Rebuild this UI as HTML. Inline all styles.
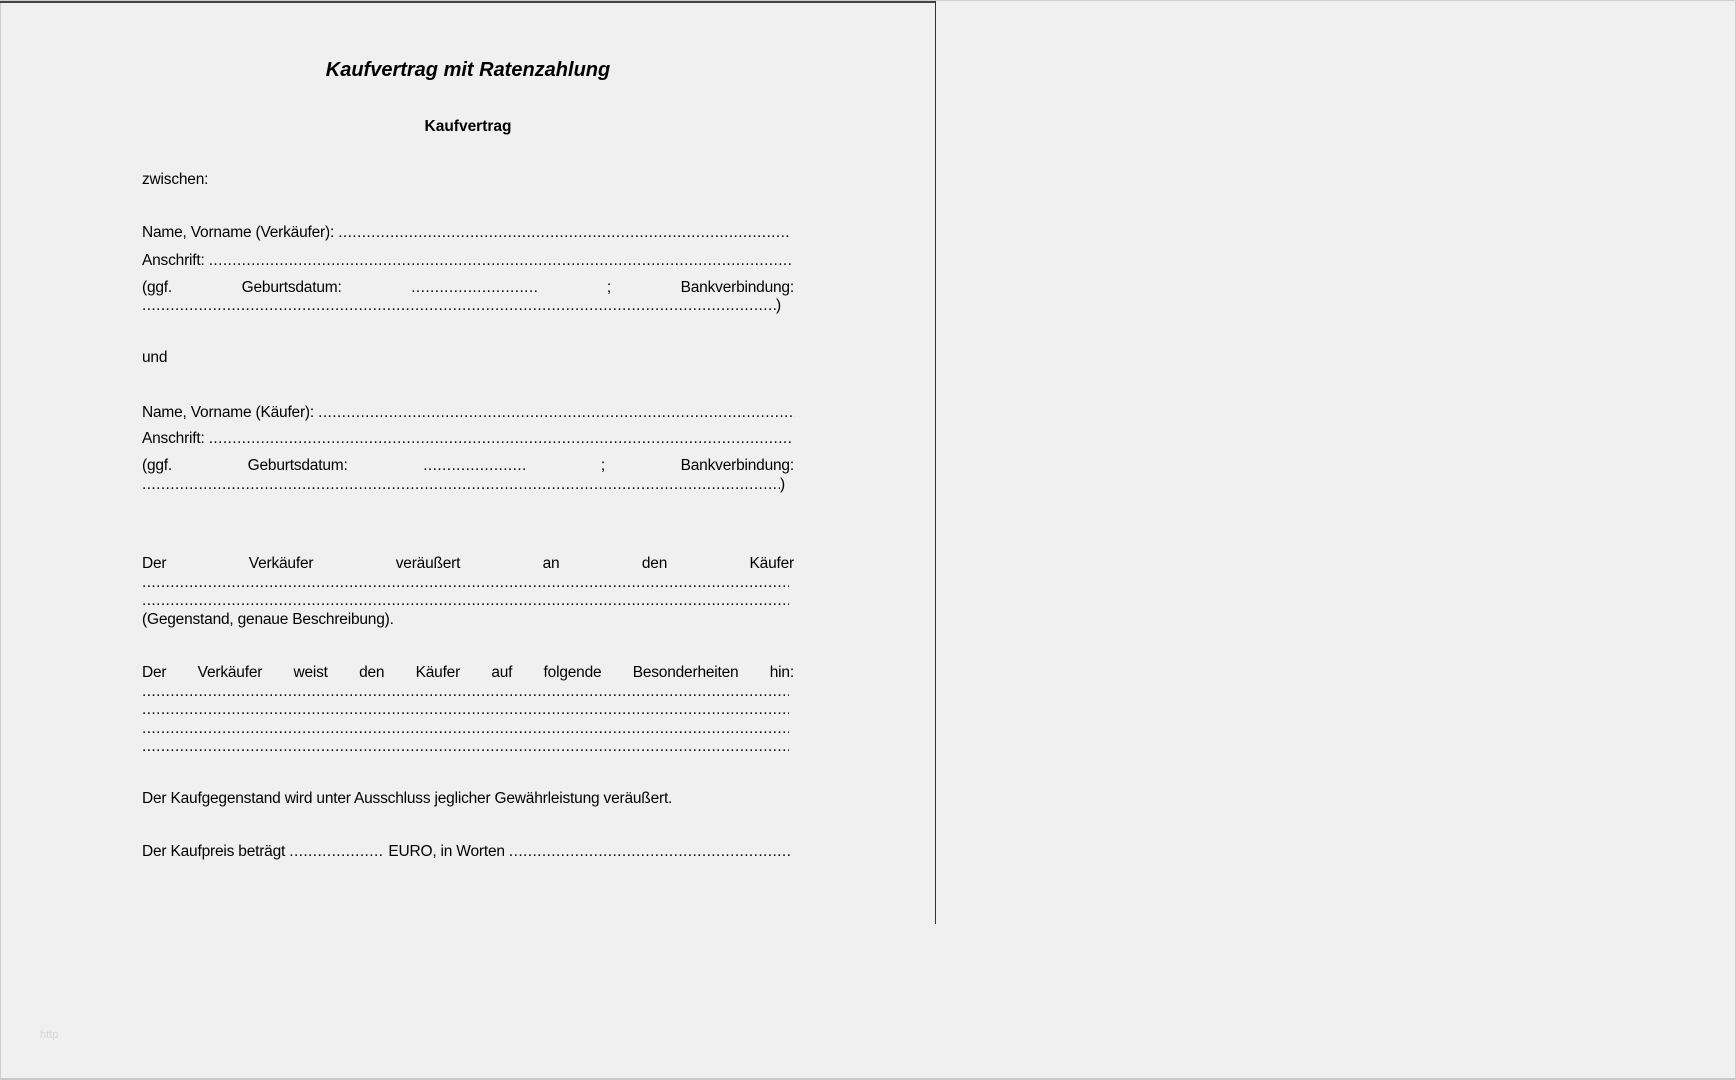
<!DOCTYPE html>
<html><head><meta charset="utf-8"><style>
html,body{margin:0;padding:0;}
body{width:1736px;height:1080px;background:#f0f0f0;position:relative;overflow:hidden;font-family:"Liberation Sans",Arial,sans-serif;color:#000;}
.frame{position:absolute;left:0;top:0;width:1734px;height:1077px;border:1px solid #cfcfcf;border-bottom:2px solid #c8c8c8;}
.topline{position:absolute;left:0;top:1px;width:936px;height:2px;background:#444;}
.vline{position:absolute;left:935px;top:1px;width:1px;height:923px;background:#333;}
.l{position:absolute;left:142px;width:652px;white-space:nowrap;font-size:15.5px;line-height:18px;letter-spacing:-0.2px;}
.j{display:flex;justify-content:space-between;}
.d{display:inline-block;overflow:hidden;vertical-align:bottom;white-space:nowrap;letter-spacing:0.4px;}
.c{position:absolute;left:0;width:936px;text-align:center;white-space:nowrap;}
</style></head><body>
<div class="frame"></div>
<div class="topline"></div>
<div class="vline"></div>

<div class="c" style="top:59px;font-size:20px;font-weight:bold;font-style:italic;">Kaufvertrag mit Ratenzahlung</div>
<div class="c" style="top:118px;font-size:15.5px;font-weight:bold;">Kaufvertrag</div>

<div class="l" style="top:171px">zwischen:</div>

<div class="l" style="top:224px">Name, Vorname (Verkäufer): <span class="d" style="width:452px">....................................................................................................................................................</span></div>
<div class="l" style="top:252px">Anschrift: <span class="d" style="width:582px">...................................................................................................................................................................................</span></div>
<div class="l j" style="top:279px"><span>(ggf.</span><span>Geburtsdatum:</span><span class="d" style="width:126px">..............................................</span><span>;</span><span>Bankverbindung:</span></div>
<div class="l" style="top:297px"><span class="d" style="width:634px">.................................................................................................................................................................................................</span>)</div>

<div class="l" style="top:349px">und</div>

<div class="l" style="top:404px">Name, Vorname (Käufer): <span class="d" style="width:477px">..............................................................................................................................................................</span></div>
<div class="l" style="top:430px">Anschrift: <span class="d" style="width:582px">...................................................................................................................................................................................</span></div>
<div class="l j" style="top:457px"><span>(ggf.</span><span>Geburtsdatum:</span><span class="d" style="width:102px">..........................................</span><span>;</span><span>Bankverbindung:</span></div>
<div class="l" style="top:476px"><span class="d" style="width:638px">.................................................................................................................................................................................................</span>)</div>

<div class="l j" style="top:555px"><span>Der</span><span>Verkäufer</span><span>veräußert</span><span>an</span><span>den</span><span>Käufer</span></div>
<div class="l" style="top:574px"><span class="d" style="width:647px">.................................................................................................................................................................................................</span></div>
<div class="l" style="top:592px"><span class="d" style="width:647px">.................................................................................................................................................................................................</span></div>
<div class="l" style="top:611px">(Gegenstand, genaue Beschreibung).</div>

<div class="l j" style="top:664px"><span>Der</span><span>Verkäufer</span><span>weist</span><span>den</span><span>Käufer</span><span>auf</span><span>folgende</span><span>Besonderheiten</span><span>hin:</span></div>
<div class="l" style="top:683px"><span class="d" style="width:647px">.................................................................................................................................................................................................</span></div>
<div class="l" style="top:701px"><span class="d" style="width:647px">.................................................................................................................................................................................................</span></div>
<div class="l" style="top:720px"><span class="d" style="width:647px">.................................................................................................................................................................................................</span></div>
<div class="l" style="top:738px"><span class="d" style="width:647px">.................................................................................................................................................................................................</span></div>

<div class="l" style="top:790px">Der Kaufgegenstand wird unter Ausschluss jeglicher Gewährleistung veräußert.</div>

<div class="l" style="top:843px">Der Kaufpreis beträgt <span class="d" style="width:95px">.....................................</span> EURO, in Worten <span class="d" style="width:281px">..........................................................................................</span></div>

<div style="position:absolute;left:40px;top:1029px;font-size:11px;color:#d4d4d4;">http</div>
</body></html>
